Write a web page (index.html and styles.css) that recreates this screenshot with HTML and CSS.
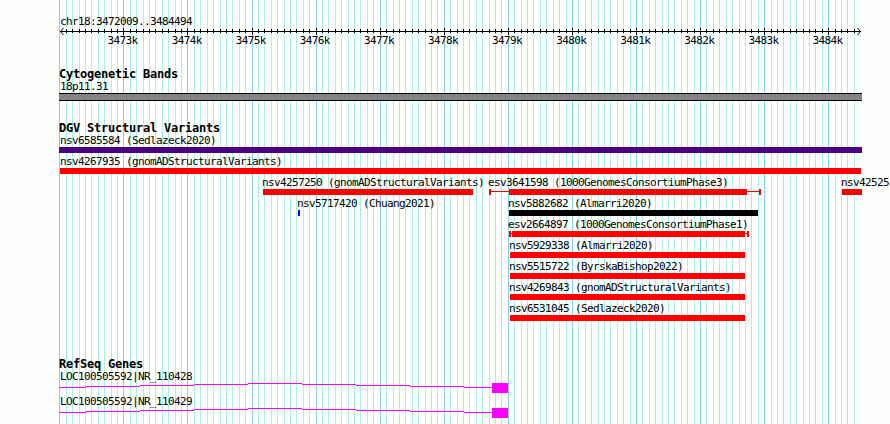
FILE: index.html
```html
<!DOCTYPE html>
<html lang="en">
<head>
<meta charset="utf-8">
<title>chr18:3472009..3484494</title>
<link rel="stylesheet" href="styles.css">
</head>
<body>
<main class="browser">
  <svg class="grid" width="890" height="424" shape-rendering="crispEdges" aria-hidden="true"><path class="minor" id="minor"/><path class="major" id="major"/></svg>

  <header class="ruler">
    <div class="region">chr18:3472009..3484494</div>
    <svg class="axis" width="890" height="9" aria-hidden="true">
      <g shape-rendering="crispEdges"><path class="ink" d="M60 4h801v1H60z"/><path class="ink" id="ticks"/></g>
      <path class="head" d="M63.5 1L60.5 4.5L63.5 8M857.5 1L860.5 4.5L857.5 8"/>
    </svg>
    <div class="scale"><span>3473k</span><span>3474k</span><span>3475k</span><span>3476k</span><span>3477k</span><span>3478k</span><span>3479k</span><span>3480k</span><span>3481k</span><span>3482k</span><span>3483k</span><span>3484k</span></div>
  </header>

  <section class="track bands">
    <h2>Cytogenetic Bands</h2>
    <div class="label">18p11.31</div>
    <div class="band"></div>
  </section>

  <section class="track variants">
    <h2>DGV Structural Variants</h2>
    <div class="row"><div class="feature" style="left:59px;width:803px"><span class="label in">nsv6585584 (Sedlazeck2020)</span><i class="bar indigo"></i></div></div>
    <div class="row"><div class="feature" style="left:60px;width:801px"><span class="label on">nsv4267935 (gnomADStructuralVariants)</span><i class="bar"></i></div></div>
    <div class="row">
      <div class="feature" style="left:263px;width:210px"><span class="label">nsv4257250 (gnomADStructuralVariants)</span><i class="bar"></i></div>
      <div class="feature" style="left:489px;width:272px"><span class="label">esv3641598 (1000GenomesConsortiumPhase3)</span><i class="whisker"><i class="bar" style="margin-left:18px;width:238px"></i></i></div>
      <div class="feature" style="left:842px;width:20px"><span class="label">nsv42525</span><i class="bar"></i></div>
    </div>
    <div class="row">
      <div class="feature" style="left:298px;width:2px"><span class="label">nsv5717420 (Chuang2021)</span><i class="bar blue"></i></div>
      <div class="feature" style="left:509px;width:249px"><span class="label">nsv5882682 (Almarri2020)</span><i class="bar black"></i></div>
    </div>
    <div class="row"><div class="feature" style="left:509px;width:240px"><span class="label">esv2664897 (1000GenomesConsortiumPhase1)</span><i class="whisker"><i class="bar" style="margin-left:1px;width:233px"></i></i></div></div>
    <div class="row"><div class="feature" style="left:510px;width:235px"><span class="label">nsv5929338 (Almarri2020)</span><i class="bar"></i></div></div>
    <div class="row"><div class="feature" style="left:510px;width:235px"><span class="label">nsv5515722 (ByrskaBishop2022)</span><i class="bar"></i></div></div>
    <div class="row"><div class="feature" style="left:510px;width:235px"><span class="label">nsv4269843 (gnomADStructuralVariants)</span><i class="bar"></i></div></div>
    <div class="row"><div class="feature" style="left:510px;width:235px"><span class="label">nsv6531045 (Sedlazeck2020)</span><i class="bar"></i></div></div>
  </section>

  <section class="track genes">
    <h2>RefSeq Genes</h2>
    <div class="gene">
      <div class="label">LOC100505592|NR_110428</div>
      <svg width="890" height="10" shape-rendering="crispEdges" aria-hidden="true"><path class="transcript" d="M59 4h27v1h-27zM86 3h54v1h-54zM140 2h54v1h-54zM194 1h54v1h-54zM248 0h54v1h-54zM302 1h54v1h-54zM356 2h54v1h-54zM410 3h54v1h-54zM464 4h28v1h-28zM492 0h16v10h-16z"/></svg>
    </div>
    <div class="gene">
      <div class="label">LOC100505592|NR_110429</div>
      <svg width="890" height="10" shape-rendering="crispEdges" aria-hidden="true"><path class="transcript" d="M59 4h27v1h-27zM86 3h54v1h-54zM140 2h54v1h-54zM194 1h54v1h-54zM248 0h54v1h-54zM302 1h54v1h-54zM356 2h54v1h-54zM410 3h54v1h-54zM464 4h28v1h-28zM492 0h16v10h-16z"/></svg>
    </div>
  </section>
</main>
<script src="grid.js"></script>
</body>
</html>
```
FILE: styles.css
```css
body {
  margin: 0;
  background: #fdfffc;
  color: #000;
  font: 11px/15px "DejaVu Sans Mono", monospace;
  letter-spacing: -0.622px;
}

.browser {
  position: relative;
  width: 890px;
  height: 424px;
  overflow: hidden;
}

svg { display: block; }

.grid { position: absolute; inset: 0; }
.minor { fill: #aeeeea; }
.major { fill: #87ceeb; }

.ruler, .track { position: relative; }

.ruler { box-sizing: border-box; padding-top: 14px; height: 52px; }
.region { padding-left: 60px; height: 13px; }
.ink { fill: #000; }
.head { fill: none; stroke: #000; stroke-width: 1; }

.scale {
  display: grid;
  grid-template-columns: repeat(12, 64.08px);
  padding-left: 107.6px;
  margin-top: -3px;
}

h2 {
  margin: 0;
  padding-left: 59px;
  height: 12px;
  font-size: 12px;
  line-height: 17px;
  letter-spacing: -0.224px;
}

.label {
  display: block;
  height: 15px;
  line-height: 17px;
  margin-left: -1px;
  white-space: nowrap;
}
.label.in { margin-left: 1px; }
.label.on { margin-left: 0; }

.bands { height: 53px; }
.bands h2 { margin-top: 15px; line-height: 15px; }
.bands .label { margin-left: 60px; height: 14px; line-height: 15px; }
.band {
  box-sizing: border-box;
  width: 803px;
  height: 8px;
  margin-left: 59px;
  background: #858385;
  border: solid #000;
  border-width: 1px 0;
}

.row { position: relative; height: 21px; }
.feature { position: absolute; top: 0; }
.bar { display: block; height: 6px; background: #f00; }
.indigo { background: #4b0082; }
.blue { background: #00f; }
.black { background: #000; }

.whisker {
  display: block;
  box-sizing: border-box;
  height: 6px;
  border: solid #f00;
  border-width: 0 2px;
  background: linear-gradient(#f00, #f00) 0 2px / 100% 1px no-repeat;
}

.genes { margin-top: 35px; }
.gene { height: 25px; }
.gene .label { margin-left: 60px; }
.transcript { fill: #f0f; }
```
FILE: grid.js
```js
// Vertical guides and ruler ticks, one every 100 bp.
const START = 3472009, SCALE = 800 / 12485, ORIGIN = 59.9;
let minor = "", major = "M59 0h1v424h-1z", ticks = "";
for (let bp = 3472100; bp <= 3484400; bp += 100) {
  const x = Math.round(ORIGIN + (bp - START) * SCALE);
  const big = bp % 1000 === 0;
  const line = `M${x} 0h1v424h-1z`;
  if (big) major += line; else minor += line;
  ticks += big ? `M${x} 1h1v7h-1z` : `M${x} 2h1v4h-1z`;
}
document.getElementById("minor").setAttribute("d", minor);
document.getElementById("major").setAttribute("d", major);
document.getElementById("ticks").setAttribute("d", ticks);
```
